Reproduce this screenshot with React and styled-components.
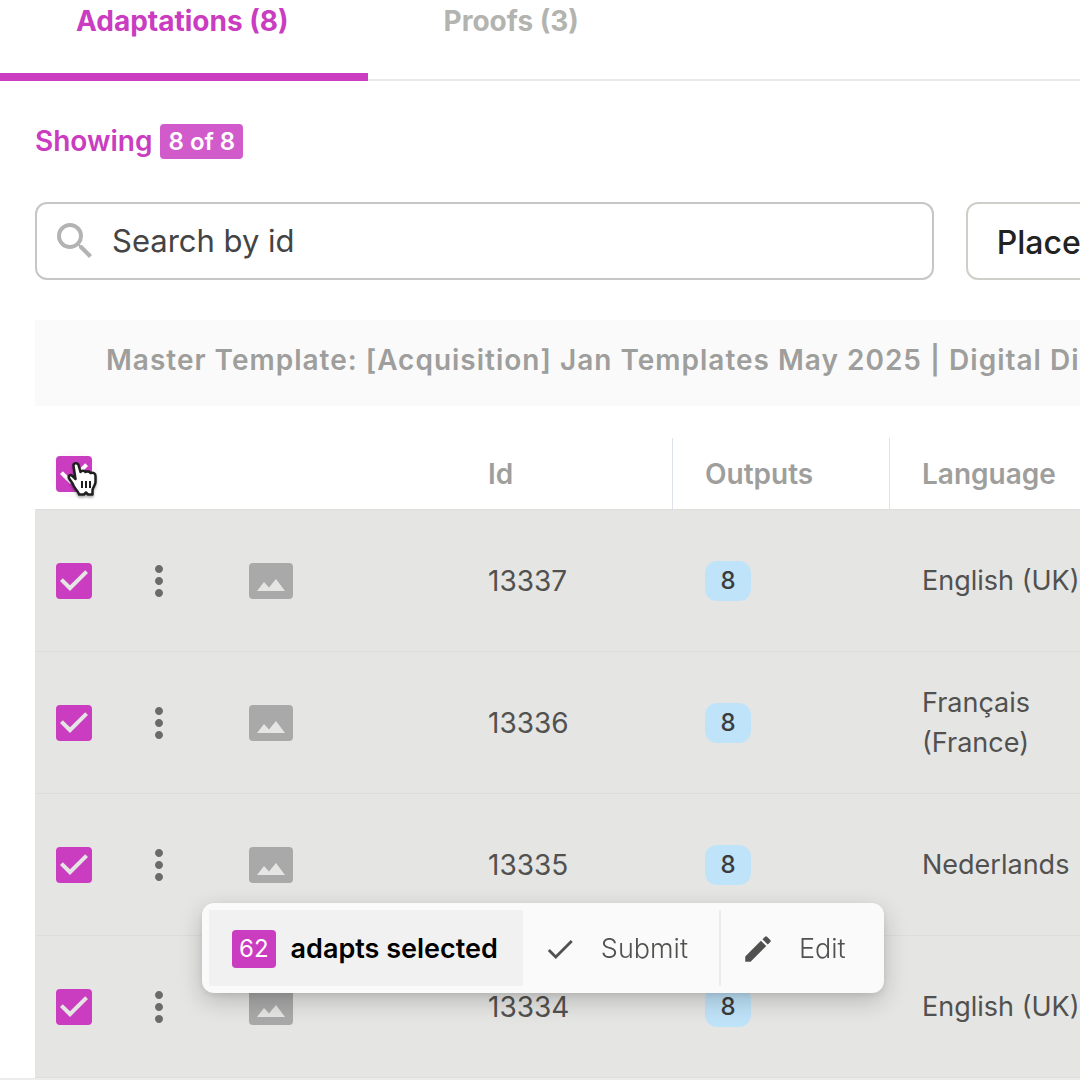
import React, { useState } from "react";
import styled, { createGlobalStyle } from "styled-components";
import { MdCheck, MdCheckBox, MdCheckBoxOutlineBlank, MdEdit, MdMoreVert, MdSearch } from "react-icons/md";

const brand = "#ca3cc0";
const muted = "#9e9e9c";

const GlobalStyle = createGlobalStyle`
  *, *::before, *::after { box-sizing: border-box; }
  body {
    margin: 0;
    background: #fff;
    color: #51514f;
    font-family: Inter, "Liberation Sans", sans-serif;
    font-size: 28px;
    line-height: 40px;
    overflow: hidden;
  }
  button, input, select { font: inherit; color: inherit; }
`;

const Page = styled.div`
  overflow: hidden;
`;

const Tabs = styled.nav`
  display: flex;
  border-bottom: 2px solid #e9e9e9;
`;

const Tab = styled.button`
  height: 81px;
  margin-bottom: -2px;
  padding: 0 79px 32px 76px;
  border: 0;
  border-bottom: 8px solid ${(p) => (p.$active ? brand : "transparent")};
  background: none;
  color: ${(p) => (p.$active ? brand : "#b3b3af")};
  font-weight: 700;
  line-height: 32px;
  white-space: nowrap;
`;

const Content = styled.main`
  padding-left: 35px;
`;

const Showing = styled.p`
  display: flex;
  align-items: center;
  gap: 8px;
  margin: 0;
  padding: 43px 0;
  color: ${brand};
  font-weight: 600;
  line-height: 35px;
`;

const CountBadge = styled.span`
  padding: 0 8px;
  border-radius: 4px;
  background: #d25bcb;
  color: #fff;
  font-size: 24px;
`;

const Filters = styled.div`
  display: flex;
  gap: 32px;
  padding-bottom: 40px;
`;

const SearchBox = styled.label`
  display: flex;
  flex: 0 0 86%;
  align-items: center;
  gap: 13px;
  height: 78px;
  padding: 0 14px;
  border: 2px solid #c6c6c6;
  border-radius: 12px;
  color: #b3b3b3;
`;

const SearchInput = styled.input`
  flex: 1;
  min-width: 0;
  padding: 0;
  border: 0;
  outline: 0;
  background: none;
  font-size: 31px;
  color: #444;
  &::placeholder { color: #444; opacity: 1; }
`;

const FilterSelect = styled.select`
  flex: 0 0 25%;
  height: 78px;
  padding: 4px 29px 0;
  border: 2px solid #cfcfca;
  border-radius: 12px;
  appearance: none;
  background: #fff;
  color: #222;
  font-size: 32px;
  font-weight: 500;
`;

const TemplateTitle = styled.h2`
  margin: 0 0 32px;
  padding: 20px 0 26px 71px;
  background: #fafafa;
  color: ${muted};
  font-size: 28px;
  font-weight: 600;
  line-height: 40px;
  letter-spacing: 1px;
  white-space: nowrap;
`;

const Table = styled.table`
  width: 1110px;
  border-collapse: separate;
  border-spacing: 0;
  table-layout: fixed;
`;

const Col = styled.col`
  width: ${(p) => p.$width}px;
`;

const HeadCell = styled.th`
  height: 72px;
  padding: 0 ${(p) => (p.$icon ? 0 : 32)}px;
  border-right: ${(p) => (p.$divided ? "1px solid #dde2ee" : "0")};
  border-bottom: 1px solid #dededd;
  color: ${muted};
  font-weight: 600;
  text-align: left;
`;

const Row = styled.tr`
  background: #e5e5e4;
`;

const Cell = styled.td`
  height: 142px;
  padding: 0 ${(p) => (p.$icon ? 0 : 32)}px;
  border-bottom: 1px solid #dddddc;
  font-size: ${(p) => (p.$prose ? 27 : 28)}px;
`;

const CheckLabel = styled.label`
  position: relative;
  display: flex;
  width: 48px;
  height: 48px;
  margin-left: 15px;
  border-radius: 50%;
  background: ${(p) => (p.$focused ? "rgba(202, 60, 192, 0.03)" : "none")};
  color: ${brand};
  cursor: pointer;
`;

const CheckInput = styled.input`
  position: absolute;
  inset: 0;
  width: 100%;
  height: 100%;
  margin: 0;
  opacity: 0;
  cursor: pointer;
`;

const Pointer = styled.svg`
  position: absolute;
  left: 15px;
  top: 11px;
  pointer-events: none;
  filter: drop-shadow(0 2px 1px rgba(0, 0, 0, 0.3));
`;

const MenuButton = styled.button`
  display: flex;
  margin-left: 22px;
  padding: 0;
  border: 0;
  background: none;
  color: #6b6b69;
`;

const Thumb = styled.svg`
  display: block;
  margin-left: 44px;
`;

const Chip = styled.span`
  display: block;
  width: 46px;
  border-radius: 12px;
  background: #bfe3f9;
  color: #3c3c3b;
  font-size: 24px;
  font-weight: 500;
  text-align: center;
`;

const Footer = styled.footer`
  border-top: 2px solid #ececec;
`;

const ActionBar = styled.div`
  position: fixed;
  left: 202px;
  bottom: 87px;
  display: flex;
  height: 90px;
  padding: 7px;
  border-radius: 12px;
  background: #fafafa;
  box-shadow: 0 8px 24px rgba(0, 0, 0, 0.2), 0 2px 6px rgba(0, 0, 0, 0.08);
`;

const Selected = styled.div`
  display: flex;
  align-items: center;
  gap: 15px;
  padding: 2px 25px 0 23px;
  background: #f1f1f1;
  color: #000;
  font-size: 27px;
  font-weight: 600;
`;

const SelectedCount = styled.span`
  padding: 0 7px;
  border-radius: 4px;
  background: ${brand};
  color: #fff;
  font-size: 24px;
  font-weight: 400;
  line-height: 38px;
`;

const Action = styled.button`
  display: flex;
  align-items: center;
  gap: 24px;
  padding: 2px 31px 0 20px;
  border: 0;
  background: none;
  font-size: 27px;
  font-weight: 300;
  & + & { border-left: 2px solid #ececec; }
`;

const rows = [
  { id: "13337", outputs: 8, language: "English (UK)" },
  { id: "13336", outputs: 8, language: "Français (France)" },
  { id: "13335", outputs: 8, language: "Nederlands" },
  { id: "13334", outputs: 8, language: "English (UK)" },
];

function Checkbox({ label, checked, focused, onChange, children }) {
  return (
    <CheckLabel $focused={focused}>
      <CheckInput type="checkbox" aria-label={label} checked={checked} onChange={onChange} />
      {checked ? <MdCheckBox size={48} /> : <MdCheckBoxOutlineBlank size={48} />}
      {children}
    </CheckLabel>
  );
}

function Hand() {
  return (
    <Pointer width="34" height="38" viewBox="0 0 34 38" aria-hidden="true">
      <path
        d="M8.500 5C8 2 12.500 1 13.500 4l2 7c1-2 4-1.500 5 0 2-1 4-.5 5 1 3-1 5 .5 5 3v6c0 3-2.500 5-3 8v4.500h-4.500l-2-2-2 2H14c-1-4-4-5-5.500-9-1-3-2.500-4-4-6.500C2.500 15 5 13 7.500 15l3 3z"
        fill="#fff"
        stroke="#1f1f1f"
        strokeWidth="2.500"
        strokeLinejoin="round"
      />
      <path d="M17 20v7M21 20v7M25 20v7" stroke="#1f1f1f" strokeWidth="2" />
    </Pointer>
  );
}

export default function App() {
  const [tab, setTab] = useState(0);
  const [picked, setPicked] = useState(rows.map((r) => r.id));
  const all = picked.length === rows.length;
  const toggle = (id) =>
    setPicked(picked.includes(id) ? picked.filter((p) => p !== id) : [...picked, id]);

  return (
    <Page>
      <GlobalStyle />
      <Tabs>
        {["Adaptations (8)", "Proofs (3)"].map((name, i) => (
          <Tab key={name} type="button" $active={tab === i} onClick={() => setTab(i)}>
            {name}
          </Tab>
        ))}
      </Tabs>
      <Content>
        <Showing>
          Showing <CountBadge>8 of 8</CountBadge>
        </Showing>
        <Filters>
          <SearchBox>
            <MdSearch size={48} />
            <SearchInput type="text" placeholder="Search by id" aria-label="Search by id" />
          </SearchBox>
          <FilterSelect aria-label="Placement">
            <option>Placement</option>
          </FilterSelect>
        </Filters>
        <TemplateTitle>
          Master Template: [Acquisition] Jan Templates May 2025 | Digital Display
        </TemplateTitle>
        <Table>
          <colgroup>
            <Col $width={78} />
            <Col $width={92} />
            <Col $width={251} />
            <Col $width={217} />
            <Col $width={217} />
            <Col $width={255} />
          </colgroup>
          <thead>
            <tr>
              <HeadCell $icon>
                <Checkbox
                  label="Select all"
                  checked={all}
                  focused
                  onChange={() => setPicked(all ? [] : rows.map((r) => r.id))}
                >
                  <Hand />
                </Checkbox>
              </HeadCell>
              <HeadCell $icon />
              <HeadCell $icon />
              <HeadCell $divided>Id</HeadCell>
              <HeadCell $divided>Outputs</HeadCell>
              <HeadCell>Language</HeadCell>
            </tr>
          </thead>
          <tbody>
            {rows.map((row) => (
              <Row key={row.id}>
                <Cell $icon>
                  <Checkbox
                    label={`Select ${row.id}`}
                    checked={picked.includes(row.id)}
                    onChange={() => toggle(row.id)}
                  />
                </Cell>
                <Cell $icon>
                  <MenuButton type="button" aria-label={`Options for ${row.id}`}>
                    <MdMoreVert size={48} />
                  </MenuButton>
                </Cell>
                <Cell $icon>
                  <Thumb width="44" height="36" viewBox="0 0 44 36" aria-hidden="true">
                    <rect width="44" height="36" rx="4" fill="#a9a9a9" />
                    <path d="M8 28l7-9 5 5.500 7-8.500 9 12z" fill="#e5e5e4" />
                  </Thumb>
                </Cell>
                <Cell>{row.id}</Cell>
                <Cell>
                  <Chip>{row.outputs}</Chip>
                </Cell>
                <Cell $prose>{row.language}</Cell>
              </Row>
            ))}
          </tbody>
        </Table>
      </Content>
      <Footer />
      <ActionBar>
        <Selected>
          <SelectedCount>62</SelectedCount> adapts selected
        </Selected>
        <Action type="button">
          <MdCheck size={34} /> Submit
        </Action>
        <Action type="button">
          <MdEdit size={34} /> Edit
        </Action>
      </ActionBar>
    </Page>
  );
}
